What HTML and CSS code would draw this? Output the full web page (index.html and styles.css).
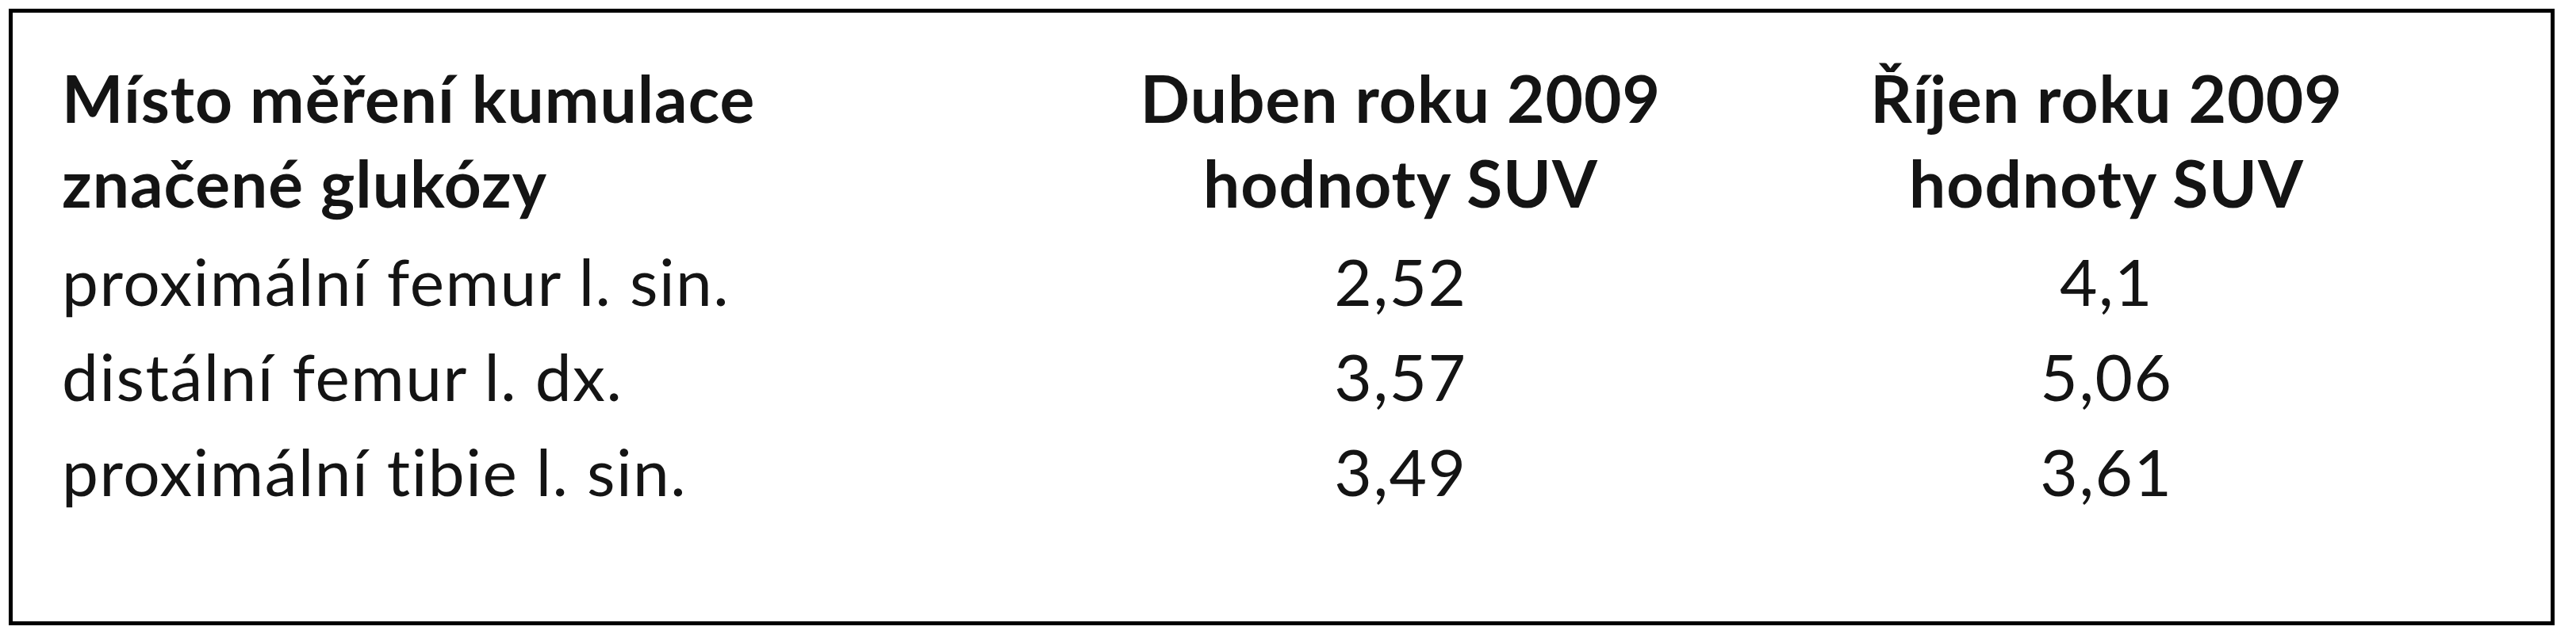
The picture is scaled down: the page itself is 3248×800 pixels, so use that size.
FILE: index.html
```html
<!DOCTYPE html>
<html lang="cs">
<head>
<meta charset="utf-8">
<title>SUV</title>
<link rel="stylesheet" href="styles.css">
</head>
<body>
<div class="frame">
  <div class="grid">
    <div class="head left">Místo měření kumulace<br>značené glukózy</div>
    <div class="head center">Duben roku 2009<br>hodnoty SUV</div>
    <div class="head center">Říjen roku 2009<br>hodnoty SUV</div>

    <div class="cell left">proximální femur l. sin.</div>
    <div class="cell center">2,52</div>
    <div class="cell center">4,1</div>

    <div class="cell left">distální femur l. dx.</div>
    <div class="cell center">3,57</div>
    <div class="cell center">5,06</div>

    <div class="cell left">proximální tibie l. sin.</div>
    <div class="cell center">3,49</div>
    <div class="cell center">3,61</div>
  </div>
</div>
</body>
</html>
```

FILE: styles.css
```css
html, body {
  margin: 0;
  padding: 0;
  background: #ffffff;
}

body {
  font-family: "Lato", "Open Sans", "Liberation Sans", sans-serif;
  color: #141414;
}

.frame {
  box-sizing: border-box;
  margin: 11px 0 0 11px;
  width: 3210px;
  height: 778px;
  border: 5px solid #000;
  padding: 54px 0 0 62px;
}

.grid {
  display: grid;
  grid-template-columns: 1243px 890px 890px;
  font-size: 82px;
}

.head {
  font-weight: 700;
  line-height: 107px;
  letter-spacing: 1px;
  padding-bottom: 10px;
}

.cell {
  font-weight: 400;
  line-height: 120px;
  letter-spacing: 1.5px;
}

.left {
  text-align: left;
}

.center {
  text-align: center;
}
```
